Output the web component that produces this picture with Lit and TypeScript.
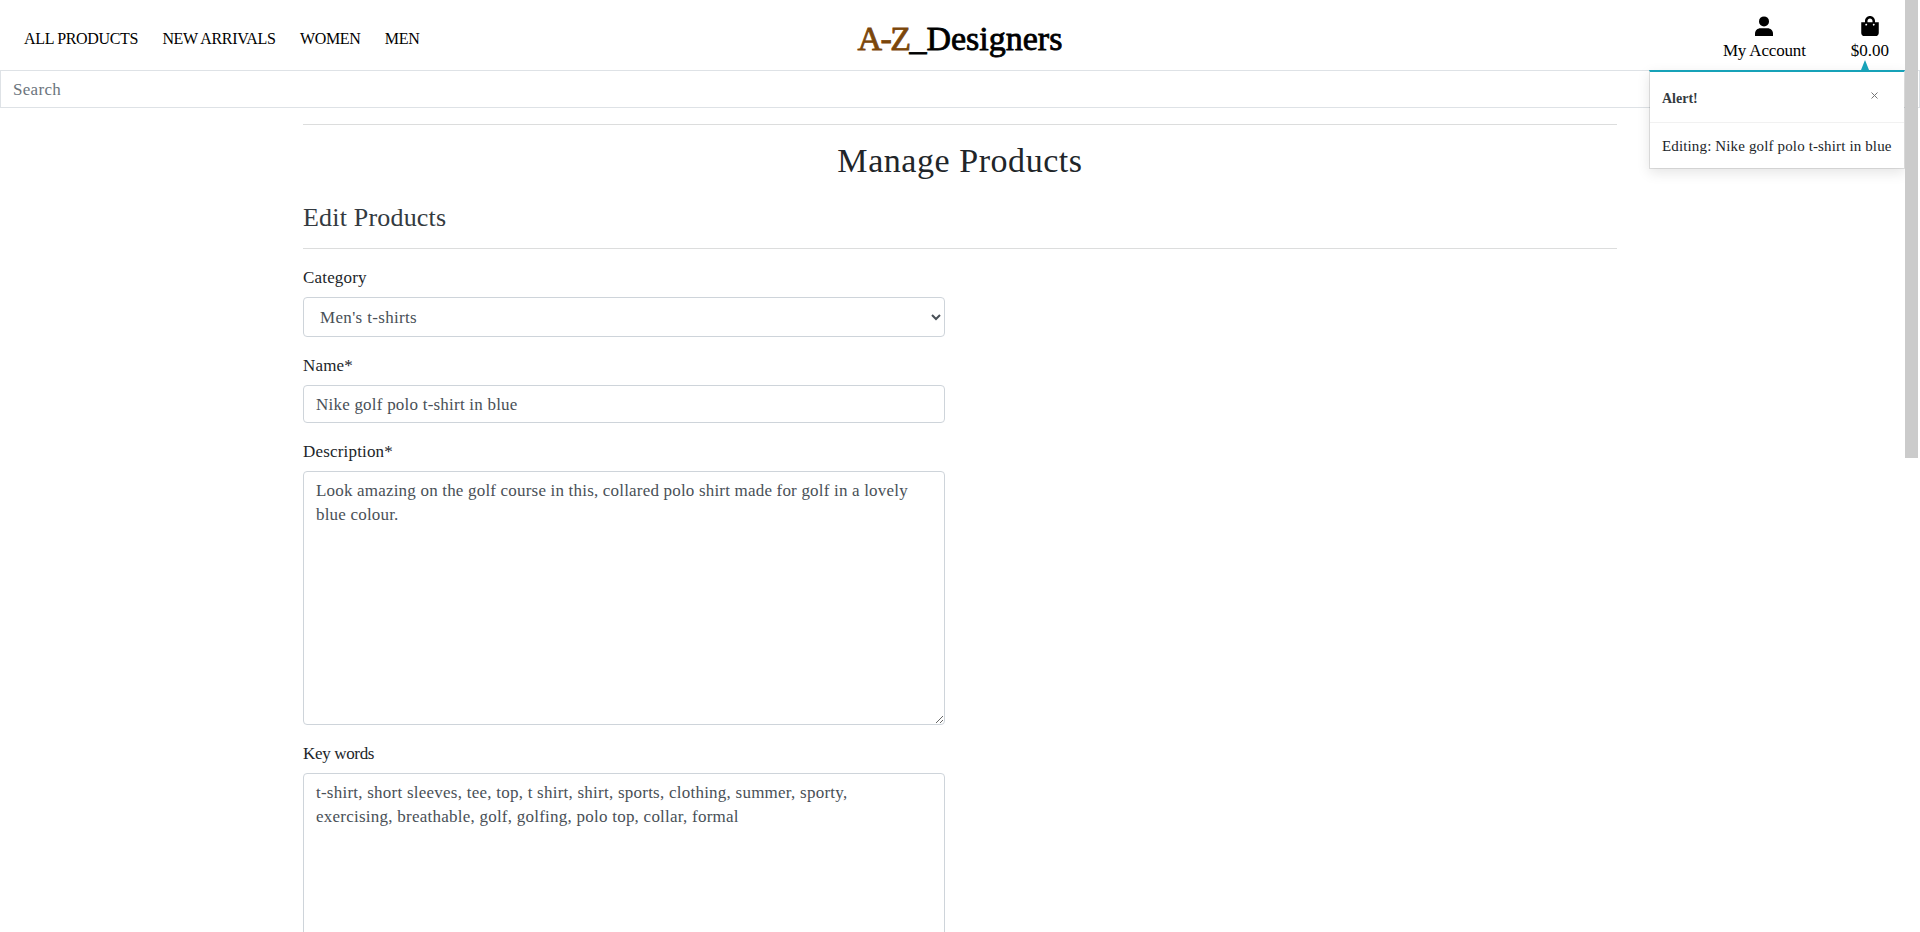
import { LitElement, html, css } from "lit";

class AppRoot extends LitElement {
  static styles = css`
    * { box-sizing: border-box; }
    :host {
      display: block;
      position: relative;
      width: 100%;
      height: 100vh;
      overflow: hidden;
      background: #fff;
      color: #212529;
      font: 17px/24px "Liberation Serif", serif;
      letter-spacing: 0.2px;
    }
    .bar {
      display: grid;
      grid-template-columns: 1fr auto 1fr;
      height: 70px;
      color: #000;
    }
    .links { display: flex; gap: 24.4px; padding: 27px 0 0 24px; font-size: 16px; letter-spacing: -0.34px; }
    .brand {
      padding-top: 16px;
      font-size: 34px;
      line-height: 46px;
      letter-spacing: 0;
      -webkit-text-stroke: 0.8px currentColor;
    }
    .brand span { color: #7b460a; -webkit-text-stroke-color: #7b460a; letter-spacing: -1.6px; margin-right: 0; }
    .tools { display: flex; justify-content: flex-end; gap: 45px; padding: 16px 31px 0 0; }
    .tool { display: flex; flex-direction: column; align-items: center; letter-spacing: 0; }
    .tool svg { display: block; width: 18px; height: 20px; margin-bottom: 3px; }
    .account { letter-spacing: -0.17px; }
    .search {
      display: block;
      width: 100%;
      height: 38px;
      padding: 7px 12px 5px;
      border: 1px solid #dee2e6;
      background: #fff;
      font: inherit;
      letter-spacing: 0.3px;
    }
    .search::placeholder { color: #6c757d; opacity: 1; }
    main { width: 1314px; margin: 0 auto; }
    hr { margin: 16px 0; border: 0; border-top: 1px solid #dcdddd; height: 0; }
    h2 { margin: 0 0 23px; padding-top: 1px; text-align: center; font-weight: 400; font-size: 34px; line-height: 38px; letter-spacing: 0.55px; }
    h5 { margin: 0; font-weight: 400; font-size: 26px; line-height: 29px; letter-spacing: 0.19px; color: #343a40; }
    form { width: 642px; }
    .group { margin-bottom: 16px; }
    label { display: block; padding-top: 1px; margin-bottom: 7px; letter-spacing: 0.18px; }
    .tight { letter-spacing: -0.33px; }
    .control {
      display: block;
      width: 100%;
      height: 38px;
      padding: 7px 12px 5px;
      border: 1px solid #ced4da;
      border-radius: 4px;
      background: #fff;
      color: #495057;
      font: inherit;
      letter-spacing: 0.22px;
    }
    select.control { height: 40px; padding: 6px 12px; letter-spacing: 0.34px; }
    textarea.control { height: 254px; letter-spacing: 0.19px; overflow: auto; resize: vertical; }
    textarea.words { padding-right: 36px; letter-spacing: 0.24px; }
    .toast {
      position: absolute;
      top: 70px;
      right: 15px;
      width: 256px;
      height: 99px;
      border: 1px solid rgba(0, 0, 0, 0.1);
      border-top: 2px solid #17a2b8;
      background: #fff;
      background-clip: padding-box;
      box-shadow: 0 4px 12px rgba(0, 0, 0, 0.1);
      font-size: 15px;
      letter-spacing: 0.14px;
    }
    .toast::before {
      content: "";
      position: absolute;
      top: -12px;
      right: 35px;
      border: 4.5px solid transparent;
      border-top: 0;
      border-bottom: 10px solid #17a2b8;
    }
    .head {
      display: flex;
      justify-content: space-between;
      height: 51px;
      padding: 15px 26px 0 12px;
      border-bottom: 1px solid #f1f1f1;
      font-size: 14px;
      font-weight: 700;
      letter-spacing: 0;
      color: #343a40;
    }
    .close { width: 7px; height: 7px; margin-top: 5px; stroke: #777; }
    .body { padding: 11px 0 0 12px; white-space: nowrap; }
    .thumb { position: absolute; top: 0; right: 2px; width: 13px; height: 458px; background: #cbcbcb; }
  `;

  render() {
    return html`
      <header>
        <nav class="bar">
          <div class="links">
            <span>ALL PRODUCTS</span><span>NEW ARRIVALS</span><span>WOMEN</span><span>MEN</span>
          </div>
          <div class="brand"><span>A-Z</span>_Designers</div>
          <div class="tools">
            <div class="tool account">
              <svg viewBox="0 0 18 20"><circle cx="9" cy="5.400" r="5" /><path d="M0 20v-2.200C0 14.500 2.500 12.300 5.500 12.300h7c3 0 5.500 2.200 5.500 5.500V20z" /></svg>
              My Account
            </div>
            <div class="tool">
              <svg viewBox="0 0 448 512"><path d="M352 160v-32C352 57.420 294.579 0 224 0 153.420 0 96 57.420 96 128v32H0v272c0 44.183 35.817 80 80 80h288c44.183 0 80-35.817 80-80V160h-96zm-192-32c0-35.290 28.710-64 64-64s64 28.710 64 64v32H160v-32zm160 120c-13.255 0-24-10.745-24-24s10.745-24 24-24 24 10.745 24 24-10.745 24-24 24zm-192 0c-13.255 0-24-10.745-24-24s10.745-24 24-24 24 10.745 24 24-10.745 24-24 24z" fill-rule="evenodd" /></svg>
              $0.00
            </div>
          </div>
        </nav>
        <input class="search" placeholder="Search" />
      </header>
      <main>
        <hr />
        <h2>Manage Products</h2>
        <h5>Edit Products</h5>
        <hr />
        <form>
          <div class="group">
            <label>Category</label>
            <select class="control"><option>Men's t-shirts</option></select>
          </div>
          <div class="group">
            <label>Name*</label>
            <input class="control" .value=${"Nike golf polo t-shirt in blue"} />
          </div>
          <div class="group">
            <label>Description*</label>
            <textarea class="control" .value=${"Look amazing on the golf course in this, collared polo shirt made for golf in a lovely blue colour."}></textarea>
          </div>
          <div class="group">
            <label class="tight">Key words</label>
            <textarea class="control words" .value=${"t-shirt, short sleeves, tee, top, t shirt, shirt, sports, clothing, summer, sporty, exercising, breathable, golf, golfing, polo top, collar, formal"}></textarea>
          </div>
        </form>
      </main>
      <aside class="toast">
        <div class="head">
          Alert!
          <svg class="close" viewBox="0 0 7 7"><path d="M.5 .5l6 6M6.500 .5l-6 6" /></svg>
        </div>
        <div class="body">Editing: Nike golf polo t-shirt in blue</div>
      </aside>
      <div class="thumb"></div>
    `;
  }
}
customElements.define("app-root", AppRoot);
